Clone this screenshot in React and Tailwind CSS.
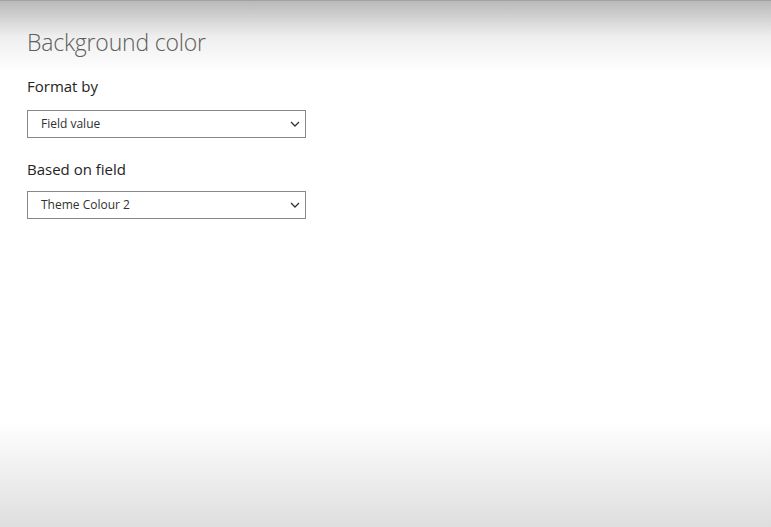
import React from "react";

function Chevron() {
  return (
    <svg width="10" height="6" viewBox="0 0 10 6" fill="none">
      <path d="M1 1l4 4 4-4" stroke="#333" strokeWidth="1.3" />
    </svg>
  );
}

function Select({ value }) {
  return (
    <div className="w-[279px] h-[28px] border border-[#8a8886] bg-white flex items-center justify-between pl-[13px] pr-[5px]">
      <span className="text-[12px] text-[#323130]">{value}</span>
      <Chevron />
    </div>
  );
}

export default function App() {
  return (
    <div
      className="w-[771px] h-[527px] flex flex-col relative overflow-hidden"
      style={{ fontFamily: '"Open Sans", "Noto Sans", sans-serif' }}
    >
      <div className="absolute inset-x-0 top-0 h-[1px] bg-[#a2a2a2]" />
      <div className="h-[70px] shrink-0 bg-gradient-to-b from-[#b9b9b9] via-[#eeeeee] to-white absolute inset-x-0 top-[1px]" />
      <div className="absolute inset-x-0 bottom-0 h-[105px] bg-gradient-to-b from-white to-[#dedede]" />
      <div className="relative flex flex-col pl-[27px] pt-[27px]">
        <h1 className="text-[23px] font-light text-[#605e5c] leading-[30px] tracking-[-0.2px]">Background color</h1>
        <div className="mt-[19px] text-[15px] text-[#252423] leading-[20px]">Format by</div>
        <div className="mt-[14px]"><Select value="Field value" /></div>
        <div className="mt-[21px] text-[15px] text-[#252423] leading-[20px]">Based on field</div>
        <div className="mt-[12px]"><Select value="Theme Colour 2" /></div>
      </div>
    </div>
  );
}
